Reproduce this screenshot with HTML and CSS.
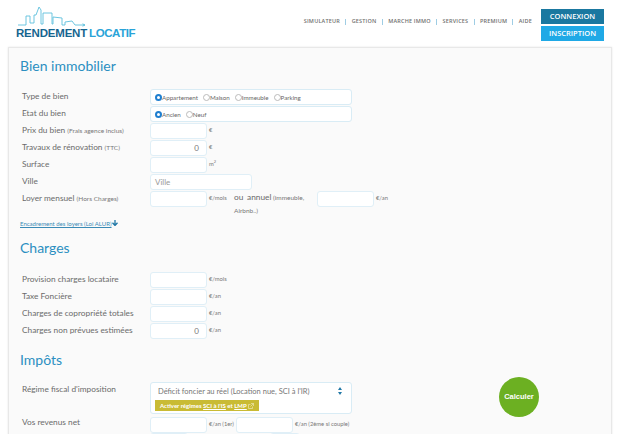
FILE: index.html
```html
<!DOCTYPE html>
<html lang="fr">
<head>
    <meta charset="UTF-8">
    <meta name="viewport" content="width=device-width, initial-scale=1.0">
    <title>Rendement Locatif</title>
    <link rel="stylesheet" href="styles.css">
</head>
<body>
    <header class="header">
        <div class="logo">
            <svg class="logo-city" width="70" height="21" viewBox="0 0 70 21">
                <path d="M1 19H9V10H13V17H17V9H19L22 1L24 4V18H26V7H35V18H36V11L45 12V19H48V16L55 15L58 19H68M68 19L65.500 17.800M68 19L65.500 20.200" fill="none" stroke="#5dbfdc" stroke-width="0.9"/>
            </svg>
            <div class="logo-text"><b>RENDEMENT</b> <span>LOCATIF</span></div>
        </div>
        <nav class="nav">
            <a>SIMULATEUR</a><i></i>
            <a>GESTION</a><i></i>
            <a>MARCHE IMMO</a><i></i>
            <a>SERVICES</a><i></i>
            <a>PREMIUM</a><i></i>
            <a>AIDE</a>
        </nav>
        <div class="auth">
            <a class="btn-connexion">CONNEXION</a>
            <a class="btn-inscription">INSCRIPTION</a>
        </div>
    </header>

    <main class="panel">
        <h2>Bien immobilier</h2>
        <div class="row">
            <label>Type de bien</label>
            <div class="box radios">
                <span class="radio on"></span><span class="radio-text">Appartement</span>
                <span class="radio"></span><span class="radio-text">Maison</span>
                <span class="radio"></span><span class="radio-text">Immeuble</span>
                <span class="radio"></span><span class="radio-text">Parking</span>
            </div>
        </div>
        <div class="row">
            <label>Etat du bien</label>
            <div class="box radios">
                <span class="radio on"></span><span class="radio-text">Ancien</span>
                <span class="radio"></span><span class="radio-text">Neuf</span>
            </div>
        </div>
        <div class="row">
            <label>Prix du bien <small>(Frais agence inclus)</small></label>
            <div class="input"></div><span class="unit">€</span>
        </div>
        <div class="row">
            <label>Travaux de rénovation <small>(TTC)</small></label>
            <div class="input">0</div><span class="unit">€</span>
        </div>
        <div class="row">
            <label>Surface</label>
            <div class="input"></div><span class="unit">m<sup>2</sup></span>
        </div>
        <div class="row">
            <label>Ville</label>
            <div class="input wide">Ville</div>
        </div>
        <div class="row tall">
            <label>Loyer mensuel <small>(Hors Charges)</small></label>
            <div class="input"></div><span class="unit unit-mois">€/mois</span>
            <div class="annuel">
                <div><span class="big">ou</span> <span class="big annuel-word">annuel</span> <small>(immeuble,</small></div>
                <div><small>Airbnb..)</small></div>
            </div>
            <div class="input"></div><span class="unit">€/an</span>
        </div>
        <a class="encadrement">Encadrement des loyers (Loi ALUR)<svg width="6" height="6" viewBox="0 0 6 6"><path d="M3 0V5M0.500 2.800L3 5.500L5.500 2.800" fill="none" stroke="#2178a6" stroke-width="1.300"/></svg></a>

        <h2 class="h-charges">Charges</h2>
        <div class="row">
            <label>Provision charges locataire</label>
            <div class="input"></div><span class="unit">€/mois</span>
        </div>
        <div class="row">
            <label>Taxe Foncière</label>
            <div class="input"></div><span class="unit">€/an</span>
        </div>
        <div class="row">
            <label>Charges de copropriété totales</label>
            <div class="input"></div><span class="unit">€/an</span>
        </div>
        <div class="row">
            <label>Charges non prévues estimées</label>
            <div class="input">0</div><span class="unit">€/an</span>
        </div>

        <h2 class="h-impots">Impôts</h2>
        <div class="impots">
            <div class="impots-form">
                <div class="row regime">
                    <label>Régime fiscal d'imposition</label>
                    <div class="box regime-box">
                        <div class="select">Déficit foncier au réel (Location nue, SCI à l'IR)<svg width="4" height="8" viewBox="0 0 4 8"><path d="M2 0L4 3H0ZM2 8L0 5H4Z" fill="#2178a6"/></svg></div>
                        <div class="activer">Activer régimes <u>SCI à l'IS</u> et <u>LMP</u><svg width="6" height="6" viewBox="0 0 6 6"><path d="M4.500 3.500V5.500H0.500V1.500H2.500M3 0.500H5.500V3M5.500 0.500L2.500 3.500" fill="none" stroke="#f3efc4" stroke-width="0.600"/></svg></div>
                    </div>
                </div>
                <div class="row revenus">
                    <label>Vos revenus net</label>
                    <div class="input"></div><span class="unit unit-couple">€/an (1er)</span>
                    <div class="input"></div><span class="unit">€/an (2ème si couple)</span>
                </div>
                <div class="row">
                    <label></label>
                    <div class="input short"></div>
                    <div class="input shorter"></div>
                </div>
            </div>
            <a class="calculer">Calculer</a>
        </div>
    </main>
</body>
</html>
```

FILE: styles.css
```css
html, body {
    height: 434px;
    overflow: hidden;
}

body {
    font-family: Lato, "Open Sans", sans-serif;
    background-color: #fff;
    color: #666;
    margin: 0;
    padding: 0;
}

.header {
    display: flex;
    align-items: flex-start;
    height: 46px;
    padding-left: 16px;
    padding-right: 16px;
}

.logo {
    margin-top: 6px;
    width: 122px;
}

.logo-city {
    display: block;
    margin-left: 1px;
}

.logo-text {
    display: flex;
    gap: 2px;
    font-family: "Liberation Sans", sans-serif;
    font-size: 11.5px;
    line-height: 13px;
    font-weight: bold;
    letter-spacing: -0.2px;
    color: #16658f;
    white-space: nowrap;
}

.logo-text span {
    color: #29a3d8;
    letter-spacing: -0.4px;
}

.nav {
    display: flex;
    align-items: center;
    margin-left: auto;
    margin-top: 16px;
    font-family: "Open Sans", sans-serif;
    font-size: 5.5px;
    line-height: 11px;
    font-weight: 600;
    color: #707070;
    letter-spacing: 0.2px;
}

.nav i {
    width: 1px;
    height: 6px;
    margin: 0 5.3px;
    background-color: #9fcde4;
}

.auth {
    display: flex;
    flex-direction: column;
    gap: 2px;
    margin-left: 9px;
    margin-top: 9px;
}

.auth a {
    display: block;
    width: 63px;
    height: 15px;
    line-height: 15px;
    font-family: "Open Sans", sans-serif;
    font-size: 7.5px;
    font-weight: 600;
    text-align: center;
    color: #fff;
}

.btn-connexion {
    background-color: #1a78a0;
}

.btn-inscription {
    background-color: #1fa9e6;
}

.panel {
    margin: 1px 8px 0;
    height: 400px;
    padding: 1px 11px;
    background-color: #fafafa;
    border: 1px solid #e8e8e8;
    box-shadow: 0 0 2px rgba(0, 0, 0, 0.1);
}

h2 {
    margin: 7px 0 13px;
    font-size: 14px;
    line-height: 20px;
    font-weight: 400;
    color: #2b8fc1;
}

.h-charges {
    margin-top: 10px;
    margin-bottom: 14px;
}

.h-impots {
    margin-top: 11px;
    margin-bottom: 12px;
}

.row {
    display: flex;
    align-items: flex-start;
    height: 16px;
    margin-bottom: 1px;
    padding-left: 2px;
}

.row label {
    flex: none;
    width: 128px;
    font-size: 8.3px;
    line-height: 14px;
    color: #6b6b6b;
    white-space: nowrap;
}

small {
    font-size: 6.5px;
    color: #777;
}

.box {
    box-sizing: border-box;
    width: 202px;
    background-color: #fff;
    border: 1px solid #d9ecf5;
    border-radius: 3px;
}

.radios {
    display: flex;
    align-items: center;
    height: 16px;
    padding-left: 4px;
}

.radio {
    box-sizing: border-box;
    flex: none;
    width: 7px;
    height: 7px;
    border: 1px solid #bbb;
    border-radius: 50%;
    background-color: #fff;
}

.radio.on {
    border: 2px solid #1f7fd0;
}

.radio-text {
    font-size: 6.2px;
    color: #666;
    margin-right: 5px;
}

.input {
    box-sizing: border-box;
    flex: none;
    width: 57px;
    height: 16px;
    padding: 0 7px;
    background-color: #fff;
    border: 1px solid #e0eff7;
    border-radius: 3px;
    font-size: 8px;
    line-height: 14px;
    color: #777;
    text-align: right;
}

.input.wide {
    width: 102px;
    text-align: left;
    padding-left: 4px;
    color: #999;
}

.input.short {
    width: 38px;
}

.input.shorter {
    width: 30px;
    margin-left: 82px;
}

.unit {
    flex: none;
    margin-left: 2px;
    font-size: 5.8px;
    line-height: 14px;
    color: #777;
}

.unit sup {
    font-size: 4px;
    line-height: 0;
}

.unit-mois {
    width: 25px;
}

.annuel {
    flex: none;
    width: 83px;
    font-size: 6.5px;
    line-height: 13px;
    color: #777;
    white-space: nowrap;
}

.annuel .big {
    font-size: 8.3px;
    color: #6b6b6b;
}

.annuel-word {
    margin-left: 2px;
}

.row.tall {
    margin-bottom: 0;
}

.row.revenus {
    margin-bottom: 0;
}

.row.revenus label {
    line-height: 11px;
}

.encadrement {
    display: block;
    margin-top: 12px;
    font-size: 6px;
    line-height: 9px;
    color: #3a8ab5;
    text-decoration: underline;
}

.impots {
    display: flex;
    align-items: flex-start;
}

.impots-form {
    width: 470px;
}

.row.regime {
    height: 32px;
    margin-bottom: 3px;
}

.regime-box {
    height: 32px;
    padding: 2px 4px;
}

.select {
    display: flex;
    justify-content: space-between;
    align-items: center;
    height: 12px;
    padding: 0 5px 0 3px;
    font-size: 7.5px;
    color: #777;
}

.activer {
    display: flex;
    align-items: center;
    width: fit-content;
    margin-top: 3px;
    padding: 0 5px;
    height: 11px;
    line-height: 11px;
    background-color: #c9bb34;
    font-size: 6px;
    font-weight: 700;
    color: #fff;
    white-space: pre;
}

.activer svg {
    margin-left: 1px;
}

.unit-couple {
    width: 27px;
    white-space: nowrap;
}

.calculer {
    display: block;
    flex: none;
    width: 40px;
    height: 40px;
    margin-left: 9px;
    margin-top: -5px;
    border-radius: 50%;
    background-color: #6cb022;
    font-family: "Liberation Sans", sans-serif;
    font-size: 7.5px;
    font-weight: bold;
    line-height: 40px;
    text-align: center;
    color: #fff;
}
```
